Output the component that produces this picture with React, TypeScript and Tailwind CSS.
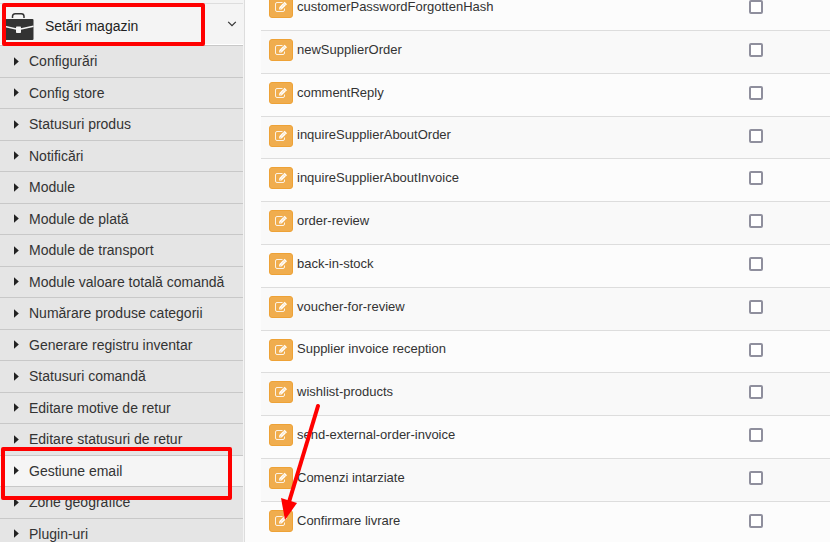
import { useState } from 'react';

const menuItems = [
  'Configurări',
  'Config store',
  'Statusuri produs',
  'Notificări',
  'Module',
  'Module de plată',
  'Module de transport',
  'Module valoare totală comandă',
  'Numărare produse categorii',
  'Generare registru inventar',
  'Statusuri comandă',
  'Editare motive de retur',
  'Editare statusuri de retur',
  'Gestiune email',
  'Zone geografice',
  'Plugin-uri',
];

const templates = [
  'customerPasswordForgottenHash',
  'newSupplierOrder',
  'commentReply',
  'inquireSupplierAboutOrder',
  'inquireSupplierAboutInvoice',
  'order-review',
  'back-in-stock',
  'voucher-for-review',
  'Supplier invoice reception',
  'wishlist-products',
  'send-external-order-invoice',
  'Comenzi intarziate',
  'Confirmare livrare',
];

const BriefcaseIcon = () => (
  <svg width="30" height="30" viewBox="0 -2 30 30" aria-hidden="true">
    <path d="M8.500 5V3.500Q8.500 0.800 11.200 0.800H17.300Q20 0.800 20 3.500V5" fill="none" stroke="#333" strokeWidth="1.500" />
    <path d="M0 7Q0 6 1 6H28.500Q29.500 6 29.500 7V26Q29.500 27 28.500 27H1Q0 27 0 26Z" fill="#333" />
    <path d="M0 13.200L14.500 16.500L29.500 13.200" fill="none" stroke="#f5f5f5" strokeWidth="1.500" />
    <rect x="12" y="13.500" width="5" height="6.500" rx="0.800" fill="#f5f5f5" />
  </svg>
);

const EditIcon = () => (
  <svg width="14" height="12" viewBox="0 0 14 12" aria-hidden="true">
    <path
      d="M8.500 1.500H3Q1.500 1.500 1.500 3V9Q1.500 10.500 3 10.500H9Q10.500 10.500 10.500 9V7.500"
      fill="none"
      stroke="#fff"
      strokeOpacity="0.850"
      strokeWidth="1"
    />
    <path d="M5.200 6.200L10.600 0.800L13 3.200L7.600 8.600H5.200Z" fill="#fff" />
    <path d="M9.400 2L11.800 4.400M5.800 6.600L7.200 8M7.400 6.200L9.800 3.800" stroke="#f0ad4e" strokeWidth="0.500" />
  </svg>
);

const Sidebar = () => (
  <nav className="relative w-[245px] shrink-0 border-r border-[#dddddd] bg-[#f4f4f4] pr-px text-sm text-[#333333]">
    <button
      type="button"
      className="mt-[3px] flex h-[42px] w-full items-center border-y border-t-[#dddddd] border-b-white pt-1 pl-1 text-[#222222]"
    >
      <BriefcaseIcon />
      <span className="ml-[11px]">Setări magazin</span>
      <svg className="mr-1.5 mb-1 ml-auto" width="10" height="6" viewBox="0 0 10 6" aria-hidden="true">
        <path d="M1.200 0.800L5 4.700L8.800 0.800" fill="none" stroke="#333" strokeWidth="1.200" />
      </svg>
    </button>
    <ul>
      {menuItems.map((item) => (
        <li key={item} className="h-8 border-t border-[#c8c8c8] even:h-[31px]">
          <a
            href="#"
            className={`flex h-full items-center gap-2.5 pb-px pl-3.5 ${
              item === 'Gestiune email' ? 'bg-[#f5f5f5]' : 'bg-[#e5e5e5]'
            }`}
          >
            <svg width="5" height="9" viewBox="0 0 5 9" aria-hidden="true">
              <path d="M0 0.300L4.800 4.500L0 8.700Z" fill="#222" />
            </svg>
            {item}
          </a>
        </li>
      ))}
    </ul>

    {/* highlighted menu entries */}
    <div className="pointer-events-none absolute top-[3px] left-0.5 h-[43px] w-[203px] rounded-xs border-4 border-[#ff0000]" />
    <div className="pointer-events-none absolute top-[447px] left-px h-[53px] w-[231px] rounded-xs border-4 border-[#ff0000]" />
  </nav>
);

const TemplateTable = () => {
  const [checked, setChecked] = useState<string[]>([]);

  const toggle = (name: string) =>
    setChecked((prev) => (prev.includes(name) ? prev.filter((n) => n !== name) : [...prev, name]));

  return (
    <table className="-mt-[13px] w-full table-fixed border-collapse text-[13px] leading-5 text-[#333333]">
      <tbody>
        {templates.map((name) => (
          <tr key={name} className="h-[43px] border-t border-[#dddddd] even:bg-[#f9f9f9] nth-[5n+4]:h-[42px]">
            <td className="w-6/7 pb-1 pl-2">
              <div className="flex items-center gap-1">
                <button
                  type="button"
                  aria-label={`Editare ${name}`}
                  className="flex h-[22px] w-6 items-center justify-center rounded-[3px] border border-[#eea236] bg-[#f0ad4e]"
                >
                  <EditIcon />
                </button>
                <span className="pb-px">{name}</span>
              </div>
            </td>
            <td className="pb-1">
              <input
                type="checkbox"
                aria-label={name}
                checked={checked.includes(name)}
                onChange={() => toggle(name)}
                className="block size-3.5 appearance-none rounded-xs border-2 border-[#8f8f9d] bg-white checked:bg-[#8f8f9d]"
              />
            </td>
          </tr>
        ))}
      </tbody>
    </table>
  );
};

export default function App() {
  return (
    <div className="relative flex h-screen overflow-hidden bg-[#fcfcfc] font-['Liberation_Sans',Arial,sans-serif]">
      <Sidebar />
      <main className="min-w-0 flex-1 pl-4">
        <TemplateTable />
      </main>

      {/* arrow pointing at the last edit button */}
      <svg
        className="pointer-events-none absolute top-[400px] left-[275px]"
        width="50"
        height="124"
        viewBox="0 0 50 124"
        aria-hidden="true"
      >
        <path d="M43 6L14 102" stroke="#f00" strokeWidth="4" strokeLinecap="round" />
        <path d="M6 98L22 103L10 120Z" fill="#f00" />
      </svg>
    </div>
  );
}
